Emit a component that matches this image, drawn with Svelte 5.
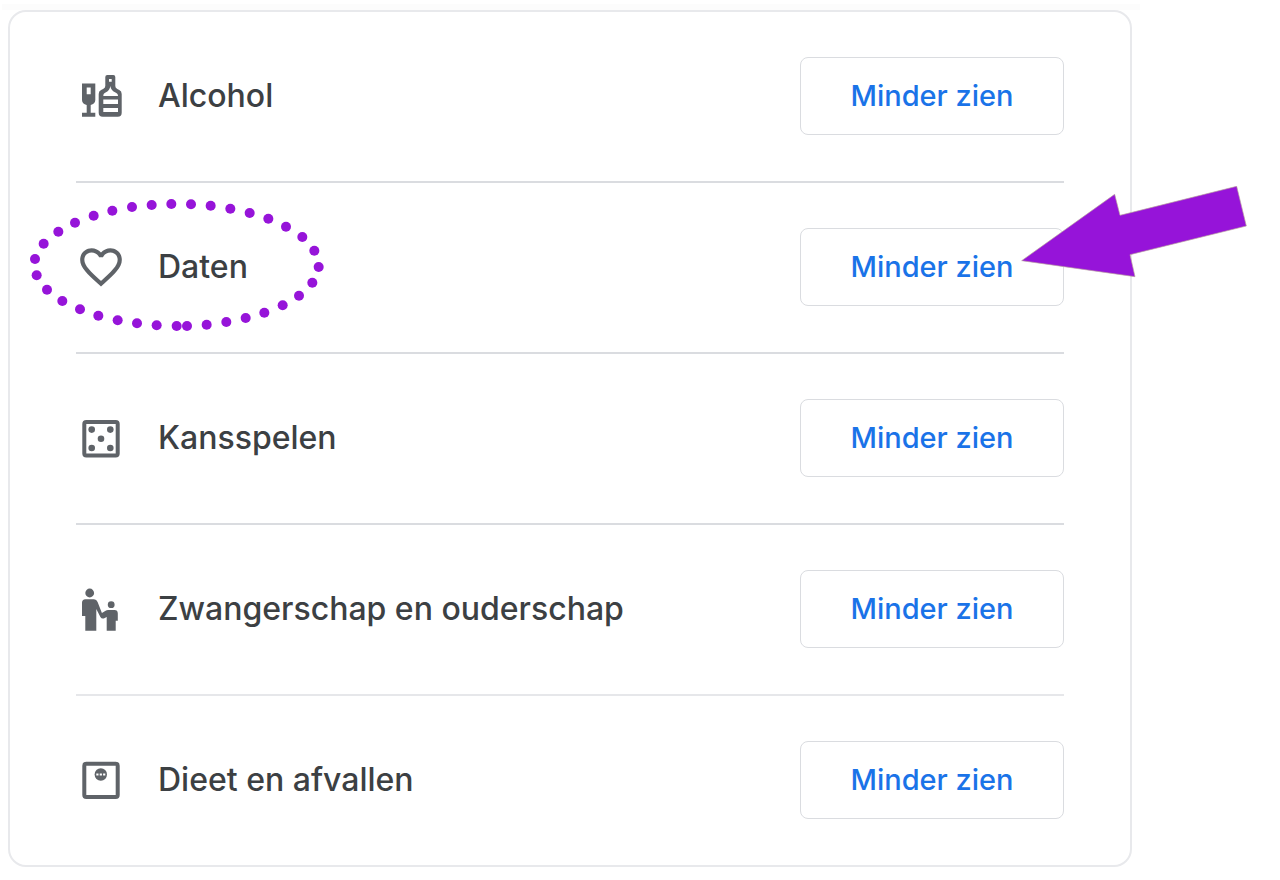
<script>
  const topics = [
    { id: 'alcohol', label: 'Alcohol' },
    { id: 'dating', label: 'Daten', marked: true },
    { id: 'gambling', label: 'Kansspelen' },
    { id: 'parenting', label: 'Zwangerschap en ouderschap' },
    { id: 'weight', label: 'Dieet en afvallen' }
  ];

  const dots = [
    [454, 42], [513, 43], [572, 47], [631, 56], [689, 69], [745, 86], [798, 110],
    [847, 141], [883, 182], [896, 231], [877, 278], [837, 317], [788, 346],
    [733, 368], [677, 384], [619, 396], [560, 404], [501, 408], [470, 408],
    [410, 406], [351, 400], [293, 391], [235, 377], [180, 358], [127, 333],
    [81, 299], [50, 256], [45, 207], [71, 161], [115, 125], [165, 98],
    [221, 77], [277, 62], [336, 51], [395, 45]
  ];
</script>

<div class="edge"></div>
<main class="card">
  <ul>
    {#each topics as topic (topic.id)}
      <li>
        <svg class="icon" viewBox="0 0 50 50" aria-hidden="true">
          {#if topic.id === 'alcohol'}
            <path fill-rule="evenodd" d="M6 12.500h13.300v16.500c0 2.500-1.800 4.300-4.600 5v7.700h4.600v4H6v-4h4.700v-7.700C7.800 33.300 6 31.500 6 29zM10.700 16.500v6.800h4v-6.800z" />
            <path fill-rule="evenodd" d="M31.300 4h6q2 0 2 2V15q0 2 2 3l2 1q2.400 1.200 2.400 4v18.700q0 4-4 4H26.700q-4 0-4-4V23q0-2.800 2.400-4l2-1q2.200-1 2.200-3V6q0-2 2-2zM33 8v2.700h2.700V8zM34.300 15c-.3 3-1.800 5-4.300 6.300-2 1-2.700 1.600-2.700 3.700H42c0-2.100-1-2.700-3-3.700-2.600-1.300-4.300-3.300-4.700-6.300zM27.300 28.600v4.400H42v-4.400zM27.300 37v4H42v-4z" />
          {:else if topic.id === 'dating'}
            <path transform="scale(2.0833)" d="M16.500 3c-1.740 0-3.410.810-4.500 2.090C10.910 3.810 9.240 3 7.500 3 4.420 3 2 5.420 2 8.500c0 3.780 3.400 6.860 8.550 11.540L12 21.350l1.450-1.320C18.600 15.360 22 12.280 22 8.500 22 5.420 19.580 3 16.500 3zm-4.400 15.550-.1.100-.1-.1C7.140 14.240 4 11.390 4 8.500 4 6.500 5.500 5 7.500 5c1.540 0 3.040.990 3.570 2.360h1.870C13.460 5.990 14.960 5 16.500 5c2 0 3.500 1.500 3.500 3.500 0 2.890-3.140 5.740-7.900 10.050z" />
          {:else if topic.id === 'gambling'}
            <rect class="frame" x="8.300" y="9" width="33.400" height="33.400" rx="2" />
            <circle cx="15.700" cy="16.600" r="3.300" />
            <circle cx="34.300" cy="16.600" r="3.300" />
            <circle cx="25" cy="25.800" r="3.300" />
            <circle cx="15.700" cy="35" r="3.300" />
            <circle cx="34.300" cy="35" r="3.300" />
          {:else if topic.id === 'parenting'}
            <circle cx="13.700" cy="9" r="4.400" />
            <circle cx="35.200" cy="20.700" r="3.400" />
            <path d="M9.500 15.300h8.500q2.600 0 3.600 2.600l4.300 11.200 3.700-2.400q1-.7 2.500-.7h6.300q3.400 0 3.400 3.400v7.300h-2.100v10h-9V33l-2.900 1.400q-2.200.6-3.400-1.400L20.300 25v21.700h-11V32H6V18.800q0-3.500 3.500-3.500z" />
          {:else}
            <rect class="frame" x="8.300" y="8.700" width="33.400" height="33.400" rx="2" />
            <circle cx="24.800" cy="19.500" r="6.200" />
            <path class="cut" d="M20.300 18.400h2.200v2.200h-2.200zM23.700 18.400h2.200v2.200h-2.200zM27.100 18.400h2.200v2.200h-2.200z" />
          {/if}
        </svg>
        <span class="label" id={topic.id}>{topic.label}</span>
        <div class="action">
          <button type="button" aria-describedby={topic.id}>Minder zien</button>
          {#if topic.marked}
            <svg class="arrow" viewBox="63 48 678 276" aria-hidden="true">
              <path d="M65 272 344 73l16 63L710 49l29 119L390 254l15 66z" />
            </svg>
          {/if}
        </div>
        {#if topic.marked}
          <svg class="ring" viewBox="24 18 900 420" aria-hidden="true">
            {#each dots as [x, y]}
              <circle cx={x} cy={y} r="15" />
            {/each}
          </svg>
        {/if}
      </li>
    {/each}
  </ul>
</main>

<style>
  :global(body) {
    background: #fff;
  }
  .edge {
    height: 6px;
    margin: 4px 140px 0 2px;
    background: #fcfcfc;
  }
  .card {
    box-sizing: border-box;
    margin: 0 148px 12px 8px;
    padding: 0 66px;
    border: 2px solid #e8e9ec;
    border-radius: 18px;
    background: #fff;
    font-family: Inter, 'Open Sans', sans-serif;
    font-weight: 500;
  }
  ul {
    margin: 0;
    padding: 0;
    list-style: none;
  }
  li {
    position: relative;
    display: flex;
    align-items: center;
    padding: 45px 0 46px;
    border-bottom: 2px solid #dadce0;
  }
  li:nth-last-child(2) {
    border-color: #e6e7ea;
  }
  li:last-child {
    border-bottom: 0;
  }
  .icon {
    flex: none;
    width: 50px;
    height: 50px;
    fill: #5f6368;
  }
  .frame {
    fill: none;
    stroke: #5f6368;
    stroke-width: 4;
  }
  .cut {
    fill: #fff;
  }
  .label {
    flex: 1;
    margin-left: 32px;
    font-size: 32px;
    line-height: 40px;
    color: #3c4043;
  }
  .action {
    position: relative;
    flex: none;
  }
  button {
    display: block;
    box-sizing: border-box;
    width: 264px;
    height: 78px;
    padding: 0;
    border: 1px solid #dadce0;
    border-radius: 8px;
    background: #fff;
    color: #1a73e8;
    font: inherit;
    font-size: 29px;
    line-height: 40px;
    cursor: pointer;
  }
  .arrow,
  .ring {
    position: absolute;
    pointer-events: none;
    fill: #9614d9;
  }
  .arrow {
    top: -42px;
    right: -183px;
    width: 226px;
    height: 92px;
    stroke: #b9a59b;
    stroke-width: 2;
  }
  .ring {
    top: 13px;
    left: -48px;
    width: 300px;
    height: 140px;
  }
</style>
